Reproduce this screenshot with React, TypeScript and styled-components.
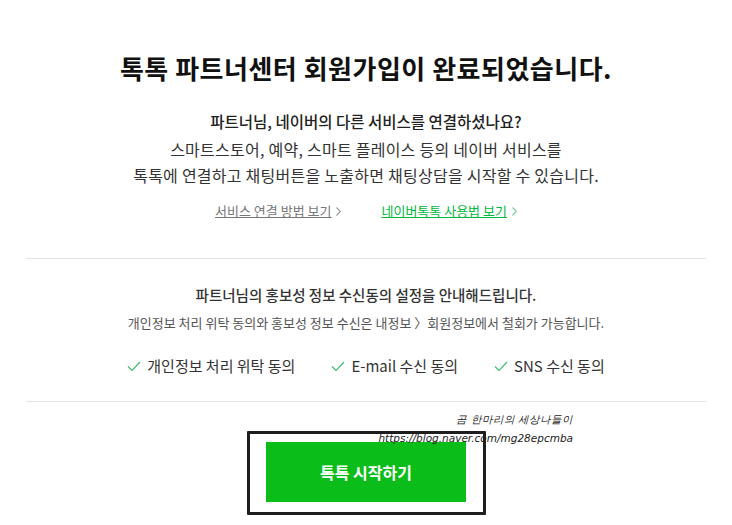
import styled, { createGlobalStyle } from "styled-components";

const GlobalStyle = createGlobalStyle`
    html, body {
        margin: 0;
        padding: 0;
        background: #fff;
    }
    body {
        font-family: "Noto Sans CJK KR", "Noto Sans", sans-serif;
        color: #222;
    }
`

const Page = styled.div`
    position: relative;
    width: 680px;
    margin: 0 auto;
    padding-top: 48px;
`

const Title = styled.h1`
    margin: 0;
    font-size: 26px;
    line-height: 40px;
    font-weight: 700;
    text-align: center;
    color: #111;
    letter-spacing: 0.5px;
`

const Section = styled.div<{ $top: number; $bottom: number; $line?: boolean }>`
    display: flex;
    flex-direction: column;
    align-items: center;
    padding-top: ${p => p.$top}px;
    padding-bottom: ${p => p.$bottom}px;
    border-bottom: ${p => (p.$line ? "1px solid #e3e3e3" : "none")};
`

const Lead = styled.p`
    margin: 20px 0 0;
    font-size: 15.5px;
    line-height: 26px;
    font-weight: 500;
    color: #222;
`

const Desc = styled.p`
    margin: 2px 0 0;
    font-size: 16px;
    line-height: 26px;
    color: #333;
    text-align: center;
    letter-spacing: 0.25px;
`

const LinkRow = styled.div`
    display: flex;
    gap: 40px;
    margin-top: 13px;
`

const GuideLink = styled.a<{ $green?: boolean }>`
    display: flex;
    align-items: center;
    gap: 5px;
    font-size: 13px;
    line-height: 20px;
    color: ${p => (p.$green ? "#00b93c" : "#777")};
    text-decoration: none;
    cursor: pointer;

    span {
        text-decoration: underline;
    }
`

const Chevron = ({ color }: { color: string }) => (
    <svg width="5" height="9" viewBox="0 0 5 9">
        <polyline points="0.5,0.5 4.3,4.5 0.5,8.5" fill="none" stroke={color} strokeWidth="1.1" />
    </svg>
)

const Notice = styled.p`
    margin: 0;
    font-size: 14.5px;
    line-height: 24px;
    font-weight: 500;
    color: #333;
`

const NoticeSub = styled.p`
    margin: 6px 0 0;
    font-size: 13px;
    line-height: 20px;
    color: #555;
`

const AgreeRow = styled.div`
    display: flex;
    gap: 36px;
    margin-top: 21px;
`

const AgreeItem = styled.div`
    display: flex;
    align-items: center;
    gap: 6px;
    font-size: 15px;
    line-height: 24px;
    color: #333;
`

const Check = () => (
    <svg width="14" height="11" viewBox="0 0 14 11">
        <polyline points="1,5.5 5,9.5 13,1" fill="none" stroke="#3fbd72" strokeWidth="1.2" />
    </svg>
)

const StartButton = styled.button`
    width: 200px;
    height: 60px;
    border: none;
    background: #0abd19;
    color: #fff;
    font-family: "Noto Sans CJK KR", sans-serif;
    font-size: 16px;
    font-weight: 700;
    cursor: pointer;
`

const Highlight = styled.div`
    position: absolute;
    left: 221px;
    top: 431px;
    width: 233px;
    height: 78px;
    border: 3px solid #1e1e1e;
    border-radius: 1px;
    pointer-events: none;
`

const Watermark = styled.div`
    position: absolute;
    right: 133px;
    top: 410px;
    text-align: right;
    font-family: "DejaVu Sans", sans-serif;
    font-style: italic;
    font-size: 10.5px;
    line-height: 19px;
    color: #222;
`

export default function App() {
    const agrees = ["개인정보 처리 위탁 동의", "E-mail 수신 동의", "SNS 수신 동의"]

    return (
        <>
            <GlobalStyle />
            <Page>
                <Section $top={0} $bottom={37} $line>
                    <Title>톡톡 파트너센터 회원가입이 완료되었습니다.</Title>
                    <Lead>파트너님, 네이버의 다른 서비스를 연결하셨나요?</Lead>
                    <Desc>
                        스마트스토어, 예약, 스마트 플레이스 등의 네이버 서비스를
                        <br />
                        톡톡에 연결하고 채팅버튼을 노출하면 채팅상담을 시작할 수 있습니다.
                    </Desc>
                    <LinkRow>
                        <GuideLink>
                            <span>서비스 연결 방법 보기</span>
                            <Chevron color="#999" />
                        </GuideLink>
                        <GuideLink $green>
                            <span>네이버톡톡 사용법 보기</span>
                            <Chevron color="#7cc9a4" />
                        </GuideLink>
                    </LinkRow>
                </Section>

                <Section $top={24} $bottom={23} $line>
                    <Notice>파트너님의 홍보성 정보 수신동의 설정을 안내해드립니다.</Notice>
                    <NoticeSub>개인정보 처리 위탁 동의와 홍보성 정보 수신은 내정보 〉회원정보에서 철회가 가능합니다.</NoticeSub>
                    <AgreeRow>
                        {agrees.map((item, index) => (
                            <AgreeItem key={index}>
                                <Check />
                                {item}
                            </AgreeItem>
                        ))}
                    </AgreeRow>
                </Section>

                <Section $top={40} $bottom={20}>
                    <StartButton>톡톡 시작하기</StartButton>
                </Section>

                <Highlight />
                <Watermark>
                    곰 한마리의 세상나들이
                    <br />
                    https://blog.naver.com/mg28epcmba
                </Watermark>
            </Page>
        </>
    )
}
